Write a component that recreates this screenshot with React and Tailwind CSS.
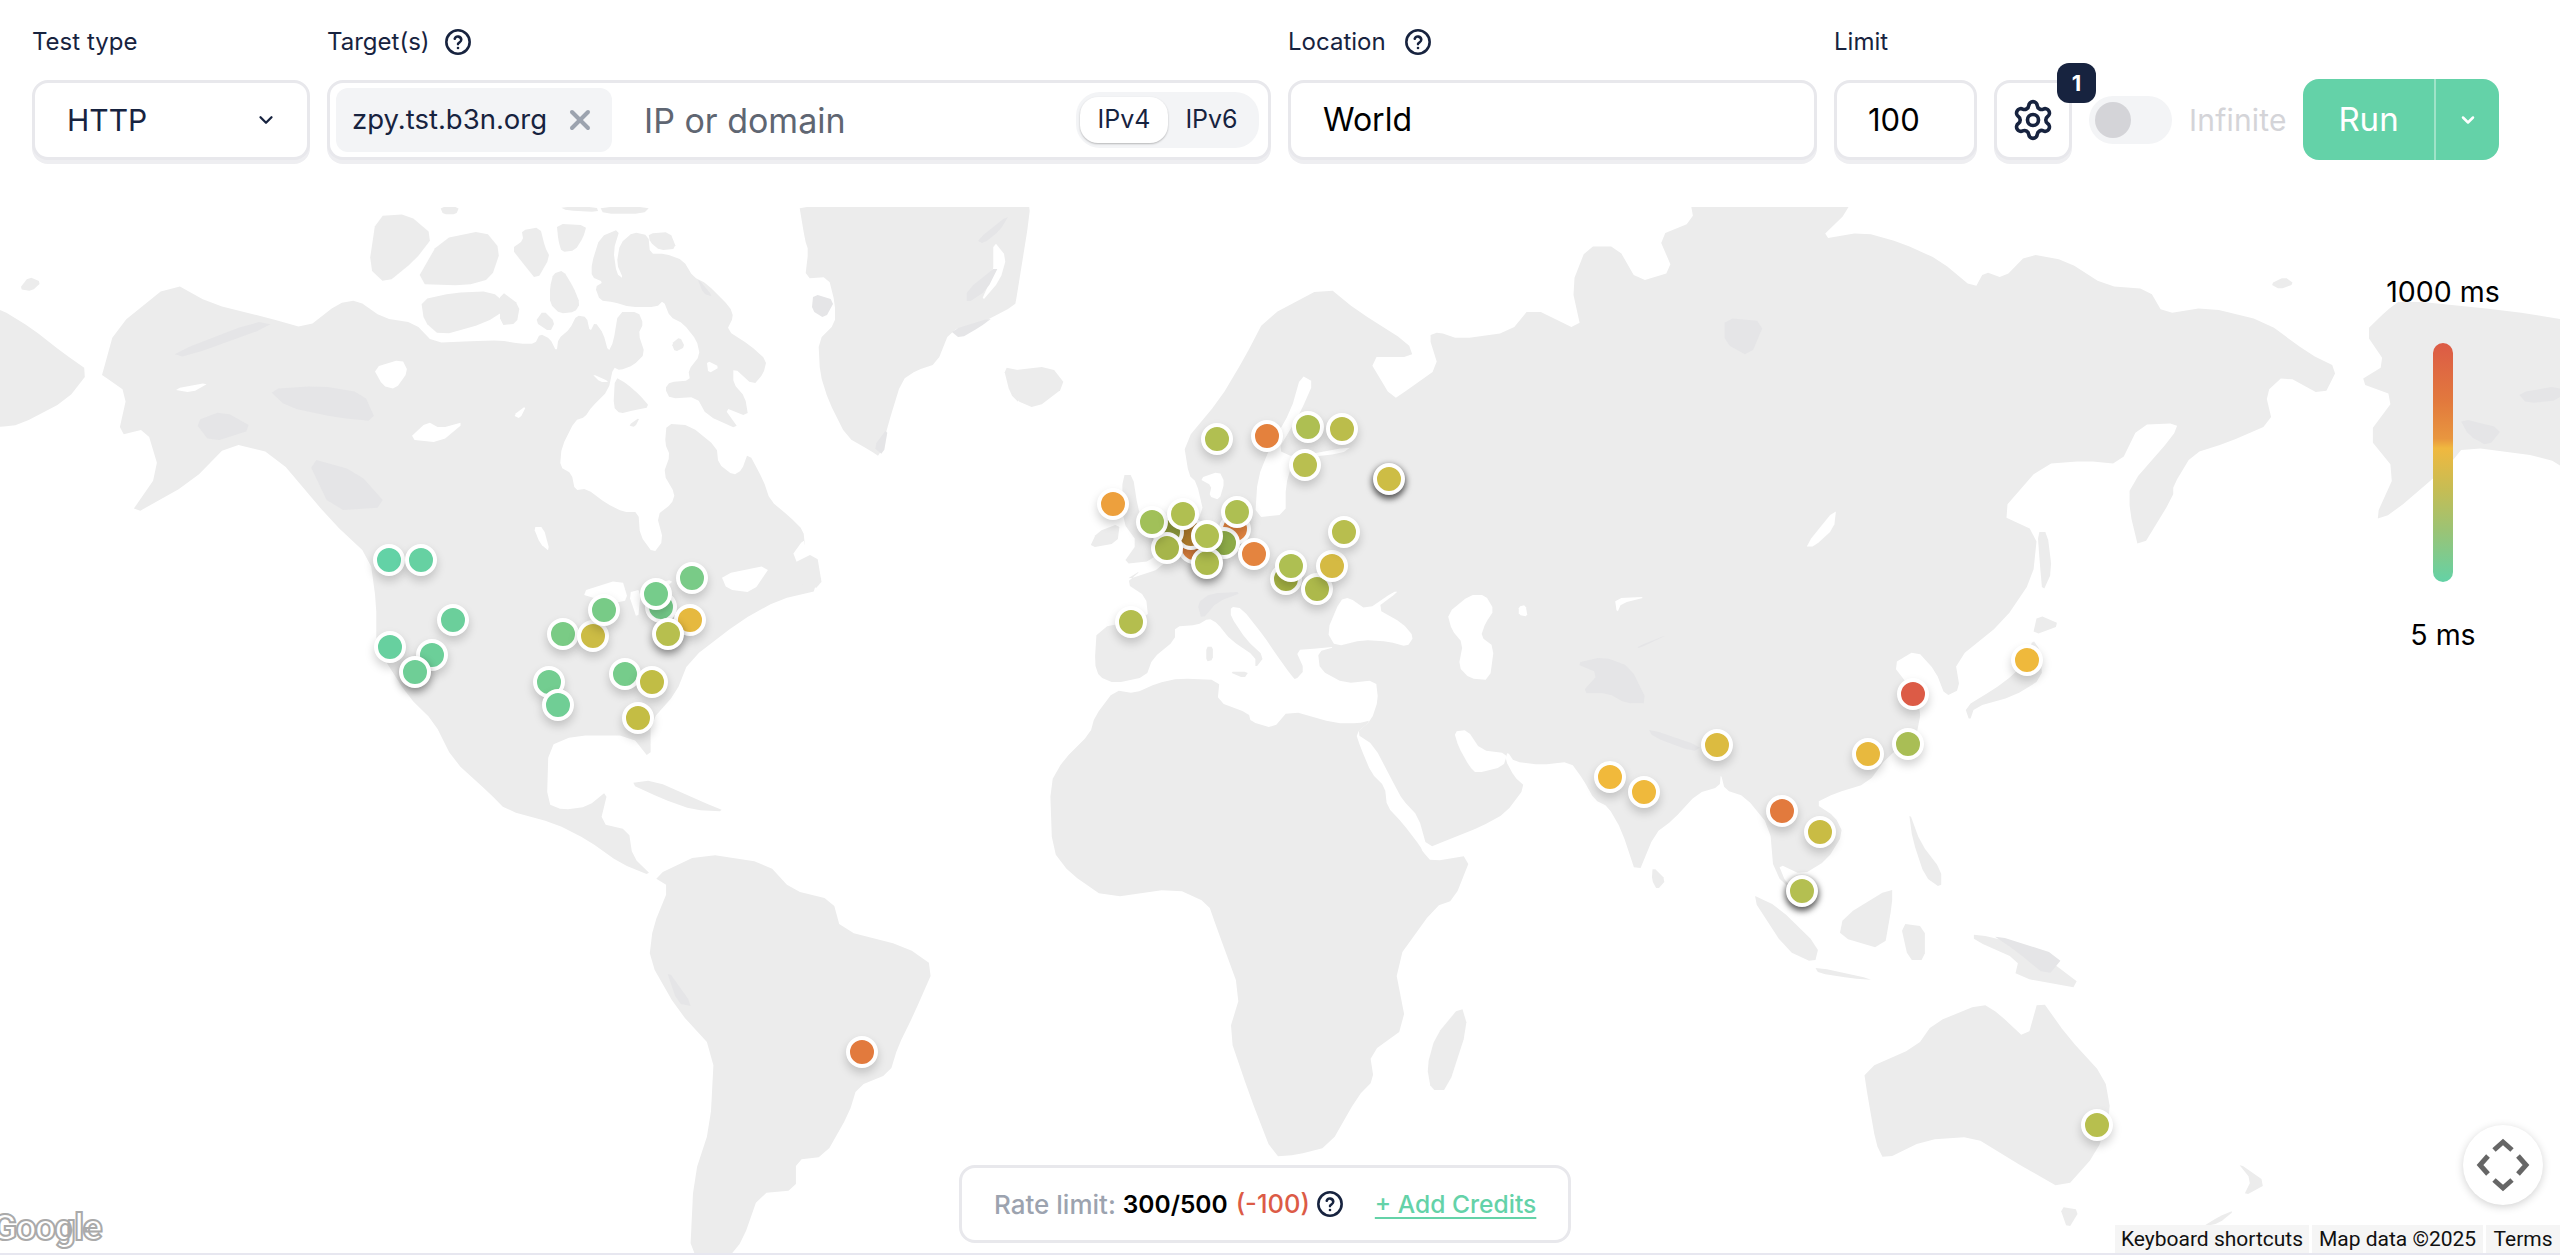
import React from "react";
import { ChevronDown, Settings, X } from "lucide-react";

const conv = (ax, sx, ay, sy) => (a) => {
  const o = [];
  for (let i = 0; i < a.length; i += 2) o.push([ax + a[i] * sx, ay + a[i + 1] * sy]);
  return o;
};
const z3 = conv(0, 0.6378, 200, 0.3571);
const z4 = conv(1000, 0.5102, 200, 0.3571);
const z5 = conv(1800, 0.4847, 200, 0.3571);
const z6 = conv(0, 0.8163, 760, 1 / 3);
const z7 = conv(1280, 0.8163, 760, 1 / 3);
const zE = conv(1050, 1 / 2.24, 560, 1 / 3);
const zC = conv(500, 1 / 3, 207, 1 / 3);

const LAND = [
  // North America
  [...z3([160,490,180,360,270,230,330,290,420,330,480,360,530,290,560,280,600,330,650,345,680,400,740,395]),
   ...zC([0,400,60,410,105,410,120,380,150,395,170,435,175,395,210,365,230,325,260,330,270,375,285,345,310,380,325,435,340,405,355,315,415,315,430,350,415,380,435,440,400,475,360,490,340,480,325,550,275,600,255,630,225,640,185,720,180,780,215,800,225,850,260,845,320,890,370,915,415,915,420,985,460,1040,490,1000,470,925,515,890,525,860,490,800,510,745,495,710,500,650,570,655,650,720,655,770,700,805,725,790,745,735,790,820,810,880,870,930,910,970,915,1020]),
   ...z3([1260,950,1240,1000,1290,1090,1220,1120,1160,1180,1080,1290,1060,1380,1020,1460,1020,1568,990,1500,900,1500,860,1530]),
   ...z6([670,130,690,150,720,140,745,90,735,190,770,210,775,290,800,350,760,310,720,240,680,190,620,150,600,100,555,0]),
   ...z3([680,1460,640,1390,590,1250,590,1130,580,1000,520,900,430,710,360,680,300,790,200,890,250,760,230,640,185,660,200,540,160,490])],
  // Arctic islands
  z3([590,45,640,40,680,100,650,170,605,235,578,190]),
  z3([690,110,760,85,785,140,770,220,730,240,650,235]),
  z3([660,280,710,260,770,255,800,300,760,345,690,380,665,340]),
  zC([35,125,70,100,65,70,120,60,135,120,150,150,110,220,70,170]),
  zC([170,50,260,55,250,90,225,130,185,135,175,100]),
  zC([275,170,300,90,360,65,340,130,350,200,370,215,350,170,360,110,400,75,445,85,450,140,495,140,550,160,580,210,620,230,690,300,700,330,680,370,750,415,800,460,790,500,760,535,700,480,700,530,735,570,745,630,670,600,720,670,620,625,590,570,510,575,495,545,510,525,570,520,565,490,600,445,590,400,550,350,510,330,490,280,470,300,390,300,340,285,300,280,285,240,310,225,275,210]),
  zC([445,80,510,75,530,125,480,130,450,105]),
  zC([515,410,540,390,555,420,525,435]),
  zC([150,240,160,200,190,190,220,240,240,290,225,315,180,320,150,290]),
  zC([105,345,130,310,165,345,150,375]),
  zC([0,250,60,295,50,350,0,355]),
  zC([345,510,380,530,420,565,450,600,400,610,360,620,340,600]),
  zC([385,655,420,630,405,660]),
  zC([180,0,290,0,295,15,200,10]),
  zC([300,0,450,0,430,20,310,20]),
  z3([690,20,720,20,715,40,695,40]),
  // Chukotka at the left edge
  z3([-20,305,0,305,50,360,100,430,140,480,105,560,30,630,0,635,-20,635]),
  z3([30,250,45,215,65,230,50,255]),
  // Greenland
  zC([895,-20,915,100,925,130,915,215,985,210,1005,290,1005,350,955,400,960,500,985,580,1040,690,1110,730,1140,750,1165,650,1205,520,1250,490,1310,470,1350,370,1440,350,1545,295,1550,270,1590,20,1585,-20]),
  zC([1510,480,1560,490,1560,590,1530,560]),
  // Newfoundland
  z3([1230,1030,1280,985,1290,1090,1240,1070]),
  // South America
  z6([800,350,860,280,940,310,970,390,1020,420,1030,510,1110,560,1145,620,1120,760,1100,860,1090,940,1050,980,1040,1060,1010,1190,975,1200,975,1290,930,1300,910,1440,890,1500,845,1500,850,1250,870,1100,875,870,830,750,795,600,800,500,820,380]),
  z6([770,70,800,60,860,125,890,155,850,150,810,115]),
  // Iceland, UK, Ireland
  z4([10,480,100,465,130,520,70,585,30,560]),
  z4([240,770,260,770,270,860,280,900,310,960,300,1010,240,1020,270,960,240,900]),
  z4([175,975,190,930,235,905,230,960]),
  // Eurasia
  [...z4([245,1065,320,1030,345,950,400,880,385,790,370,770,360,680,430,560,480,440,520,330,640,240,700,310,800,400,810,440,720,440,770,560,800,530,860,470,840,380,860,370,900,390,1000,370,1040,300,1140,370,1120,240,1150,130,1210,130,1250,230,1320,200,1290,100,1360,60,1350,-20]),
   ...z5([100,-20,100,30,40,110,130,90,210,120,290,170,360,250,380,200,420,220,470,150,550,170,630,240,720,250,750,320,840,300,960,340,1050,430,1110,470,1080,550,1000,490,960,540,975,625,880,680,810,710,770,800,770,830,700,985,680,870,680,800,770,660,780,625,700,630,660,740,590,730,500,740,410,880,490,930,480,1060,420,1180,320,1290,330,1370,300,1390,280,1320,240,1260,190,1300,230,1370,250,1430,240,1500,180,1560]),
   ...z7([720,70,680,100,655,130,680,170,690,220,670,300,640,345,610,310,620,370,650,430,640,420,605,340,600,200,570,110,545,90,540,40]),
   ...zE([1500,680,1450,700,1395,780,1355,820,1315,950,1280,810,1250,740,1220,720,1195,660,1165,605,1100,615,1040,605,1025,575,1020,600,1040,650,1065,680,1020,760,965,800,900,835,845,865,825,770,790,720,770,670,725,555,685,520,720,480,735,420,730,360,660,370,605,330,600,275,640,260,600,265,550,270,570,330,550,360,540,345,505,280,480,230,430,145,405,140,405,170,440,240,480,290,460,325,460,290,405,240,375,190,355,175,330,195,280,200,280,240,230,295,215,350,145,370,110,350,100,310,105,205,220,175,215,110,170,70,205,30])],
  // Africa
  [...zE([145,390,190,400,240,370,290,355,380,360,375,425,445,460,450,485,500,505,535,450,640,490,690,490,720,480,685,520,695,560,720,640,750,680,755,740,790,790,830,860,835,875,855,905,945,885,905,1020]),
   ...z7([190,440,140,610,155,800,110,880,115,960,95,1010,60,1160,20,1185]),
   ...z6([1560,1190,1530,1000,1505,820,1520,700,1490,500,1480,430,1440,385,1355,415]),
   ...zE([45,940,5,870,0,670,30,600,90,520,100,470])],
  zE([350,260,365,260,365,300,350,305]),
  zE([400,335,445,335,435,355]),
  // Islands Asia-Pacific
  z7([222,735,230,800,205,990,185,990,180,920,190,830]),
  zE([1350,920,1380,960,1360,990,1348,960]),
  z7([575,400,610,440,660,560,655,610,620,570]),
  z7([690,470,750,380,750,430,740,570,685,530]),
  z7([655,620,730,660,700,655,660,640]),
  z7([770,150,785,250,810,330,810,385,790,350,775,240]),
  z7([760,490,790,500,790,600,770,600]),
  z7([850,520,920,560,990,690,900,650,905,600,850,540]),
  z7([715,930,780,860,800,790,860,730,880,760,915,840,930,710,965,830,1010,950,1018,1060,1000,1180,960,1290,910,1220,890,1190,850,1130,790,1140,740,1200,730,1150,720,1010]),
  z7([955,1340,980,1350,965,1410]),
  z7([1172,1205,1210,1270,1180,1310,1190,1260]),
  z7([1170,1350,1150,1390,1130,1400,1150,1370]),
  z5([340,1420,400,1370,440,1330,470,1280,480,1230,495,1260,500,1340,440,1390,360,1420,350,1460]),
  z5([490,1160,540,1190,480,1220]),
  z5([490,930,510,930,520,1040,500,1100,495,1020]),
  // Alaska on the right edge
  z5([1165,370,1210,310,1240,280,1460,310,1600,340,1600,770,1540,720,1370,690,1340,740,1220,880,1185,895,1230,760,1170,660,1230,550,1150,510,1210,460]),
  z5([970,235,1000,215,1020,235,990,250]),
];

const WATER = [
  z4([590,490,615,510,590,590,570,640,545,700,575,720,690,690,670,710,575,725,560,800,560,880,500,890,505,780,530,690,570,590]),
  z4([390,780,430,760,440,790,430,840,410,830,415,800]),
  zE([620,215,650,120,670,112,710,150,770,95,780,95,730,145,790,190,815,230,800,260,760,245,700,240,640,260]),
  zE([890,160,940,105,975,105,995,150,975,190,965,230,995,260,985,360,940,355,915,320,925,250,900,210]),
  zE([1050,140,1065,135,1070,170,1050,165]),
  zE([1265,115,1340,110,1280,130,1270,160]),
  zE([905,515,935,510,965,570,1025,580,1015,620,955,640,940,620,915,560]),
  z5([10,970,75,860,70,920,30,970]),
  z3([585,470,630,445,640,480,620,530,600,520]),
  z3([640,670,690,680,730,620,690,640,670,620]),
  zC([100,960,130,960,150,1035,120,1010]),
  zC([40,625,80,595,60,635]),
  zC([275,500,330,525,300,525]),
  zC([620,460,660,480,625,500]),
  zC([1480,100,1520,150,1500,220,1440,290,1480,200]),
  z3([905,1100,975,1060,985,1120,960,1130]),
  z3([985,1100,1005,1090,1000,1180]),
  z3([1005,1085,1060,1060,1030,1105]),
  z3([1130,1050,1210,1020,1180,1100,1140,1090]),
  z3([300,540,330,510,270,530]),
];

const RIDGES = [
  z3([270,430,400,340,430,350,290,440]),
  z3([305,620,350,590,400,640,330,680]),
  z3([420,530,500,520,570,540,590,620,530,610,450,580]),
  z3([480,720,560,760,610,860,520,870]),
  zC([940,260,1005,280,975,335,935,310]),
  zC([1350,370,1480,330,1440,360,1380,395]),
  zC([1120,720,1165,660,1150,745]),
  zC([590,210,640,270,610,260]),
  zC([1430,100,1530,20,1500,70,1450,110]),
  zC([1400,250,1500,170,1460,250,1400,290]),
  zE([1175,310,1240,290,1300,320,1340,430,1290,430,1250,400,1190,400,1230,340]),
  zE([1340,505,1460,560,1440,575,1350,530]),
  zE([1315,260,1390,220,1320,265]),
  zE([330,130,360,100,435,95,375,125,340,180]),
  z4([1420,330,1500,340,1470,440,1420,400]),
  z5([1360,610,1450,640,1420,690,1380,660]),
  z5([1480,540,1568,520,1568,560,1500,570]),
  z6([815,620,850,740,830,730]),
  z7([870,520,960,590,940,650,900,570]),
];

const MARKERS = [
  ...z3([610,1008]).map((p) => [p, "#63d2a6"]),
  ...z3([660,1008]).map((p) => [p, "#66d1a2"]),
  ...z3([710,1175]).map((p) => [p, "#6bcf9b"]),
  ...z3([612,1252]).map((p) => [p, "#67d09f"]),
  ...z3([678,1275]).map((p) => [p, "#6ccf99"]),
  ...z3([650,1322]).map((p) => [p, "#6fce96", 1]),
  ...z3([882,1214]).map((p) => [p, "#7acb85"]),
  ...z3([929,1220]).map((p) => [p, "#ccbc45"]),
  ...z3([947,1148]).map((p) => [p, "#78cb87"]),
  ...z3([860,1350]).map((p) => [p, "#73cd90"]),
  ...z3([875,1415]).map((p) => [p, "#70ce95"]),
  ...z3([980,1328]).map((p) => [p, "#76cc8b"]),
  ...z3([1023,1350]).map((p) => [p, "#c1bd45"]),
  ...z3([1000,1450]).map((p) => [p, "#c4bd44"]),
  ...z3([1037,1140]).map((p) => [p, "#76cc8b"]),
  ...z3([1028,1102]).map((p) => [p, "#76cc8b"]),
  ...z3([1085,1058]).map((p) => [p, "#79cb87"]),
  ...z3([1082,1175]).map((p) => [p, "#e6b93f"]),
  ...z3([1047,1215]).map((p) => [p, "#b7bf4e", 1]),
  ...z4([222,852]).map((p) => [p, "#eda03d"]),
  ...z4([380,975]).map((p) => [p, "#e38540", 0]),
  ...z4([375,935]).map((p) => [p, "#b5802f", 0]),
  ...z4([460,920]).map((p) => [p, "#e38540", 0]),
  ...z4([330,930]).map((p) => [p, "#8f9c3c", 0]),
  ...z4([328,975]).map((p) => [p, "#a6b54a", 0]),
  ...z4([440,960]).map((p) => [p, "#8dab48", 0]),
  ...z4([405,1017]).map((p) => [p, "#adbb4d", 1]),
  ...z4([298,903]).map((p) => [p, "#a1c059", 0]),
  ...z4([358,878]).map((p) => [p, "#b0bf51", 0]),
  ...z4([464,873]).map((p) => [p, "#aebf52", 0]),
  ...z4([405,940]).map((p) => [p, "#b0bf51", 0]),
  ...z4([498,992]).map((p) => [p, "#e4843f"]),
  ...z4([560,1060]).map((p) => [p, "#a3b043"]),
  ...z4([570,1025]).map((p) => [p, "#aebf52"]),
  ...z4([621,1090]).map((p) => [p, "#adb94b"]),
  ...z4([651,1025]).map((p) => [p, "#d5ba43"]),
  ...z4([675,930]).map((p) => [p, "#b8be4e"]),
  ...z4([425,668]).map((p) => [p, "#b1bf51"]),
  ...z4([523,662]).map((p) => [p, "#e4813d"]),
  ...z4([604,635]).map((p) => [p, "#aebf52"]),
  ...z4([671,640]).map((p) => [p, "#bbbd4b"]),
  ...z4([597,742]).map((p) => [p, "#b9bf50"]),
  ...z4([762,780]).map((p) => [p, "#cdbd45", 2]),
  ...z4([257,1182]).map((p) => [p, "#b4be4e"]),
  ...z4([1405,1525]).map((p) => [p, "#dcbb40"]),
  ...z5([468,1288]).map((p) => [p, "#efb93c"]),
  ...z5([234,1383]).map((p) => [p, "#dc5b46"]),
  ...z5([140,1550]).map((p) => [p, "#e8b93e"]),
  ...z5([222,1523]).map((p) => [p, "#a9be55"]),
  ...z7([404,50]).map((p) => [p, "#f1b93b"]),
  ...z7([446,95]).map((p) => [p, "#efb93c"]),
  ...z7([615,153]).map((p) => [p, "#e27a3d"]),
  ...z7([661,215]).map((p) => [p, "#c9bc44"]),
  ...z7([639,393]).map((p) => [p, "#b4bf51", 2]),
  ...z7([1001,1095]).map((p) => [p, "#b7bf4e"]),
  ...z6([1056,875]).map((p) => [p, "#e27a3d"]),
];

// One pass of corner cutting, so that the traced coasts do not look faceted.
const smooth = (pts) => {
  const o = [];
  for (let i = 0; i < pts.length; i++) {
    const a = pts[i];
    const b = pts[(i + 1) % pts.length];
    o.push([a[0] * 0.8 + b[0] * 0.2, a[1] * 0.8 + b[1] * 0.2]);
    o.push([a[0] * 0.2 + b[0] * 0.8, a[1] * 0.2 + b[1] * 0.8]);
  }
  return o;
};
const poly = (pts) => smooth(pts).map((p) => p[0].toFixed(1) + "," + p[1].toFixed(1)).join(" ");

function Help({ size = 28 }) {
  return (
    <svg width={size} height={size} viewBox="0 0 24 24" fill="none" stroke="#17233f" strokeWidth="2.2" strokeLinecap="round" strokeLinejoin="round">
      <circle cx="12" cy="12" r="10" />
      <path d="M9.2 9.2a2.9 2.9 0 0 1 5.6 1c0 1.9-2.8 2.3-2.8 3.6" />
      <path d="M12 17.2h.01" />
    </svg>
  );
}

function Label({ children, help, wide }) {
  return (
    <div className={"flex h-[32px] items-center text-[24px] text-[#17233f] " + (wide ? "gap-[18px]" : "gap-[14px]")}>
      <span>{children}</span>
      {help && <Help />}
    </div>
  );
}

const box = "h-[80px] rounded-[16px] border-[3px] border-[#e8e8ec] bg-white shadow-[0_4px_0_#eeeef1]";

function Marker({ p, color, dark }) {
  const shadow =
    dark === 2
      ? "0 3px 6px 1px rgba(0,0,0,.65)"
      : dark === 1
      ? "0 4px 8px rgba(0,0,0,.45)"
      : "0 5px 10px rgba(0,0,0,.18)";
  return (
    <div
      className="absolute h-[32px] w-[32px] rounded-full border-[4px] border-white"
      style={{ left: p[0] - 16, top: p[1] - 207 - 16, backgroundColor: color, boxShadow: shadow }}
    />
  );
}

export default function App() {
  return (
    <div className="h-[1255px] w-[2560px] overflow-hidden bg-white font-['Inter',sans-serif]">
      <header className="flex h-[207px] items-start gap-[17px] px-[32px] pt-[26px]">
        <div className="flex w-[278px] flex-col gap-[22px]">
          <Label>Test type</Label>
          <div className={box + " flex items-center justify-between pl-[32px] pr-[30px] text-[30px] text-[#17233f]"}>
            <span>HTTP</span>
            <ChevronDown size={22} color="#17233f" strokeWidth={2.5} />
          </div>
        </div>
        <div className="flex w-[944px] flex-col gap-[22px]">
          <Label help>Target(s)</Label>
          <div className={box + " flex items-center pl-[6px] pr-[9px]"}>
            <div className="flex h-[64px] w-[276px] items-center justify-between rounded-[12px] bg-[#f3f4f6] pl-[16px] pr-[16px] text-[27.5px] text-[#17233f]">
              <span>zpy.tst.b3n.org</span>
              <X size={32} color="#9ca3af" strokeWidth={3} />
            </div>
            <span className="ml-[32px] text-[34px] text-[#5f6672]">IP or domain</span>
            <div className="ml-auto flex h-[56px] w-[183px] items-center rounded-[24px] bg-[#f3f4f6] p-[4px] text-[25px] text-[#17233f]">
              <span className="flex h-[46px] w-[88px] items-center justify-center rounded-[18px] bg-white shadow-[0_1px_2px_rgba(0,0,0,.25)]">IPv4</span>
              <span className="flex flex-1 items-center justify-center">IPv6</span>
            </div>
          </div>
        </div>
        <div className="flex w-[529px] flex-col gap-[22px]">
          <Label help wide>Location</Label>
          <div className={box + " flex items-center pl-[32px] text-[32px] text-black"}>World</div>
        </div>
        <div className="flex w-[143px] flex-col gap-[22px]">
          <Label>Limit</Label>
          <div className={box + " flex items-center pl-[31px] text-[31px] text-black"}>100</div>
        </div>
        <div className="relative mt-[54px] w-[78px]">
          <div className={box + " flex items-center justify-center"}>
            <Settings size={44} color="#17233f" strokeWidth={2} />
          </div>
          <div className="absolute right-[-24px] top-[-17px] flex h-[40px] w-[39px] items-center justify-center rounded-[12px] bg-[#17233f] text-[22px] font-bold text-white">1</div>
        </div>
        <div className="mt-[70px] flex h-[48px] w-[83px] items-center rounded-full bg-[#f3f4f6] pl-[6px]">
          <div className="h-[36px] w-[36px] rounded-full bg-[#d4d4d8]" />
        </div>
        <div className="mt-[79px] flex h-[30px] w-[97px] items-center whitespace-nowrap text-[30px] tracking-[0.2px] text-[#d4d4d8]">Infinite</div>
        <div className="mt-[53px] flex h-[81px] w-[196px] rounded-[16px] bg-[#64d2a8] text-white">
          <div className="flex w-[131px] items-center justify-center text-[33px]">Run</div>
          <div className="flex flex-1 items-center justify-center border-l-2 border-[#9fe3c8]">
            <ChevronDown size={20} color="#ffffff" strokeWidth={3} />
          </div>
        </div>
      </header>
      <main className="relative h-[1048px] w-full overflow-hidden border-b-[2px] border-[#e7e7f0]">
        <svg className="absolute left-0 top-0" width="2560" height="1046" viewBox="0 207 2560 1046">
          {LAND.map((p, i) => (
            <polygon key={i} points={poly(p)} fill="#ececec" />
          ))}
          {WATER.map((p, i) => (
            <polygon key={i} points={poly(p)} fill="#ffffff" />
          ))}
          {RIDGES.map((p, i) => (
            <polygon key={i} points={poly(p)} fill="#e5e5e7" />
          ))}
        </svg>
        {MARKERS.map((m, i) => (
          <Marker key={i} p={m[0]} color={m[1]} dark={m[2]} />
        ))}
        <div className="absolute left-[2405px] top-[69px] flex w-[76px] flex-col items-center whitespace-nowrap text-[28.5px] text-black">
          <span className="flex h-[32px] items-center">1000 ms</span>
          <div className="mt-[35px] h-[239px] w-[20px] rounded-full bg-[linear-gradient(to_bottom,#dc5b46_0%,#e27a3d_25%,#e8963f_40%,#f0b83f_44%,#c4bd55_62%,#9cc374_78%,#63d2a6_100%)]" />
          <span className="mt-[37px] flex h-[32px] items-center">5 ms</span>
        </div>
        <div className="absolute left-[-8px] top-[1002px] font-['Roboto',sans-serif] text-[37px] font-bold leading-none tracking-[-1.5px] text-white [-webkit-text-stroke:2px_#aaaaaa]">Google</div>
        <div className="absolute left-[959px] top-[958px] flex h-[78px] w-[612px] items-center whitespace-nowrap rounded-[16px] border-[3px] border-[#e8e8ec] bg-white pl-[32px] text-[26px] font-medium">
          <span className="text-[#9ca3af]">Rate limit:</span>
          <span className="ml-[7px] text-[24.5px] font-semibold text-black">300/500</span>
          <span className="ml-[8px] text-[25.5px] text-[#dc5b46]">(-100)</span>
          <span className="ml-[6px] flex"><Help size={28} /></span>
          <span className="ml-[31px] text-[24.6px] text-[#64d2a8] underline underline-offset-4">+ Add Credits</span>
        </div>
        <div className="absolute left-[2463px] top-[918px] flex h-[80px] w-[80px] items-center justify-center rounded-full bg-white shadow-[0_2px_8px_rgba(0,0,0,.18)]">
          <svg width="56" height="56" viewBox="-28 -28 56 56" fill="none" stroke="#666666" strokeWidth="5">
            <path d="M-9 -15 L0 -23 L9 -15" />
            <path d="M-9 15 L0 23 L9 15" />
            <path d="M-15 -9 L-23 0 L-15 9" />
            <path d="M15 -9 L23 0 L15 9" />
          </svg>
        </div>
        <div className="absolute bottom-0 left-[2115px] flex h-[28px] items-center gap-[3px] font-['Roboto',sans-serif] text-[21px] leading-none text-[#111111]">
          <span className="flex h-[28px] w-[194px] items-center justify-center bg-[#f5f5f5]">Keyboard shortcuts</span>
          <span className="flex h-[28px] w-[171px] items-center justify-center bg-[#f5f5f5]">Map data ©2025</span>
          <span className="flex h-[28px] w-[74px] items-center justify-center bg-[#f5f5f5]">Terms</span>
        </div>
      </main>
    </div>
  );
}
